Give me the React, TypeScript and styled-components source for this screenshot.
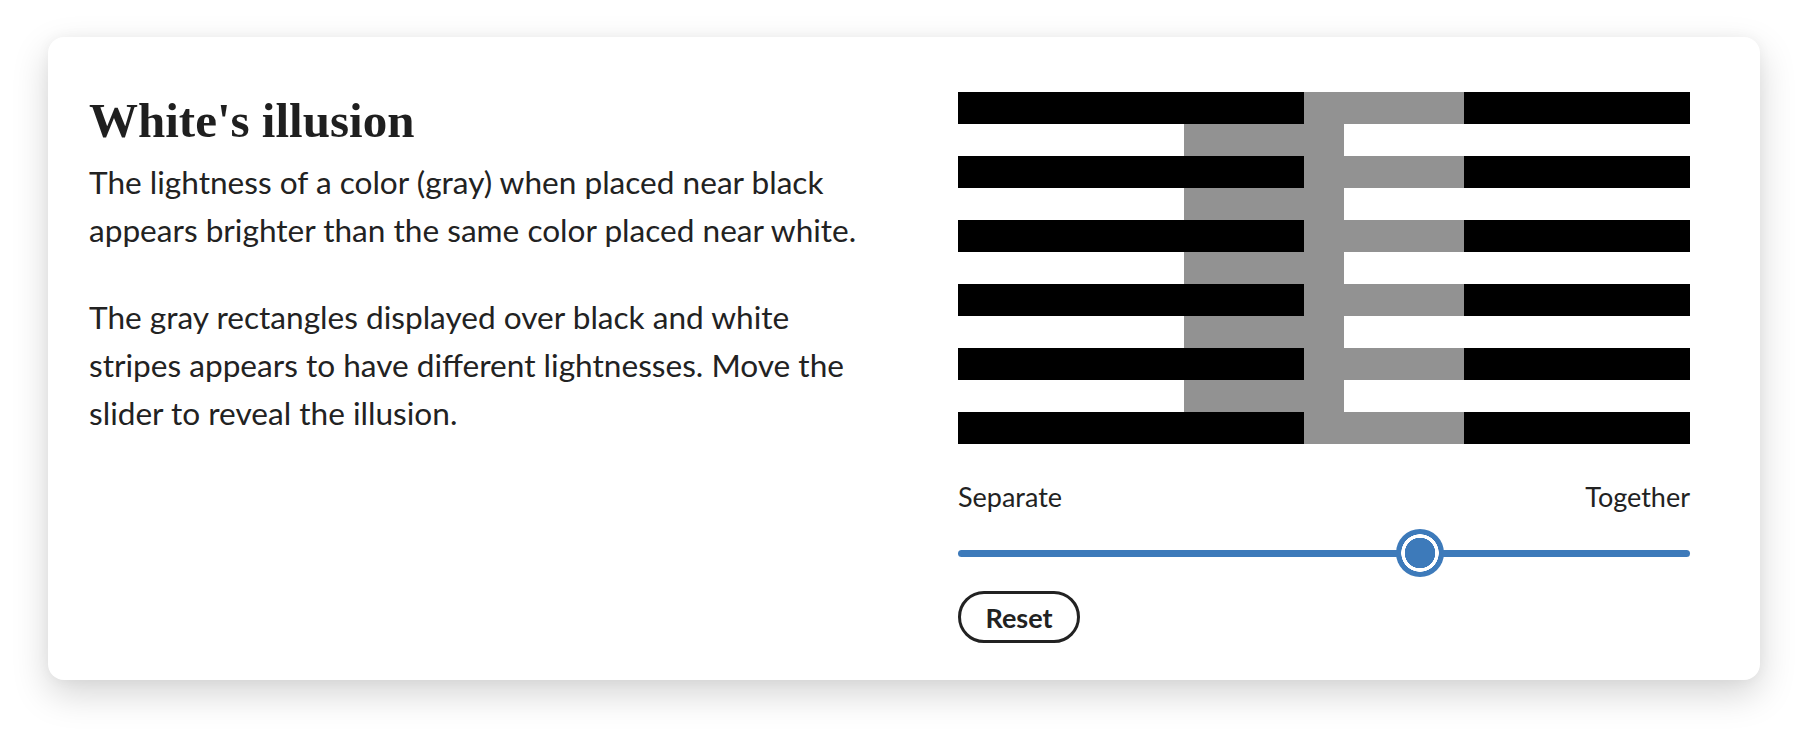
import { useState } from 'react';
import styled, { createGlobalStyle } from 'styled-components';

const GlobalStyle = createGlobalStyle`
    html, body {
        margin: 0;
        background: #ffffff;
    }
    body {
        font-family: Lato, "Noto Sans", sans-serif;
        color: #222222;
    }
`;

const Page = styled.div`
    padding: 37px 48px 60px 48px;
`;

const Card = styled.section`
    box-sizing: border-box;
    height: 643px;
    background: #ffffff;
    border-radius: 16px;
    box-shadow: 0 14px 36px rgba(0, 0, 0, 0.17), 0 0 14px rgba(0, 0, 0, 0.04);
    padding: 55px 70px 36px 41px;
    display: grid;
    grid-template-columns: 780px 732px;
    justify-content: space-between;
`;

const TextColumn = styled.div`
    display: flex;
    flex-direction: column;
`;

const Title = styled.h1`
    margin: 0;
    font-family: "Liberation Serif", "DejaVu Serif", serif;
    font-weight: 700;
    font-size: 49px;
    line-height: 58px;
    color: #1f1f1f;
`;

const Paragraph = styled.p`
    margin: 8px 0 0;
    font-size: 31.6px;
    line-height: 48px;
    color: #222222;

    & + & {
        margin-top: 39px;
    }
`;

const DemoColumn = styled.div`
    display: flex;
    flex-direction: column;
    align-items: flex-start;
`;

const Stripes = styled.svg`
    display: block;
    width: 732px;
    height: 352px;
`;

const Labels = styled.div`
    width: 100%;
    margin-top: 37px;
    display: flex;
    justify-content: space-between;
    font-size: 27px;
    line-height: 32px;
    color: #222222;
`;

const Range = styled.input`
    -webkit-appearance: none;
    appearance: none;
    width: 100%;
    height: 48px;
    margin: 16px 0 0;
    padding: 0;
    background: transparent;

    &::-webkit-slider-runnable-track {
        height: 7px;
        border-radius: 4px;
        background: #3d7aba;
    }

    &::-webkit-slider-thumb {
        -webkit-appearance: none;
        width: 48px;
        height: 48px;
        margin-top: -20.5px;
        border-radius: 50%;
        background: radial-gradient(circle, #3d7aba 0 15px, #ffffff 15.5px 18.5px, #3d7aba 19px 24px);
        cursor: pointer;
    }
`;

const ResetButton = styled.button`
    box-sizing: border-box;
    margin-top: 14px;
    width: 122px;
    height: 52px;
    border: 3px solid #222222;
    border-radius: 26px;
    background: #ffffff;
    font-family: Lato, "Noto Sans", sans-serif;
    font-weight: 700;
    font-size: 27px;
    color: #222222;
    cursor: pointer;
`;

const STRIPE_W = 732;
const STRIPE_H = 32;
const ROWS = 11;
const GRAY_W = 160;
const DEFAULT_VALUE = 64;

export default function App() {
    const [value, setValue] = useState(DEFAULT_VALUE);
    // how far the gray blocks sit from the middle, 0 when slider is at "Together"
    const offset = (100 - value) * (60 / 36);

    return (
        <Page>
            <GlobalStyle />
            <Card>
                <TextColumn>
                    <Title>White's illusion</Title>
                    <Paragraph>The lightness of a color (gray) when placed near black appears brighter than the same color placed near white.</Paragraph>
                    <Paragraph>The gray rectangles displayed over black and white stripes appears to have different lightnesses. Move the slider to reveal the illusion.</Paragraph>
                </TextColumn>

                <DemoColumn>
                    <Stripes viewBox={`0 0 ${STRIPE_W} ${STRIPE_H * ROWS}`} shapeRendering="crispEdges">
                        {Array.from({ length: ROWS }).map((_, i) => {
                            const black = i % 2 === 0;
                            const center = STRIPE_W / 2 + (black ? offset : -offset);
                            return (
                                <g key={i}>
                                    <rect x={0} y={i * STRIPE_H} width={STRIPE_W} height={STRIPE_H} fill={black ? '#000000' : '#ffffff'} />
                                    <rect x={center - GRAY_W / 2} y={i * STRIPE_H} width={GRAY_W} height={STRIPE_H} fill="#929292" />
                                </g>
                            );
                        })}
                    </Stripes>

                    <Labels>
                        <span>Separate</span>
                        <span>Together</span>
                    </Labels>
                    <Range type="range" min={0} max={100} value={value} onChange={e => setValue(Number(e.target.value))} />
                    <ResetButton onClick={() => setValue(DEFAULT_VALUE)}>Reset</ResetButton>
                </DemoColumn>
            </Card>
        </Page>
    );
}
